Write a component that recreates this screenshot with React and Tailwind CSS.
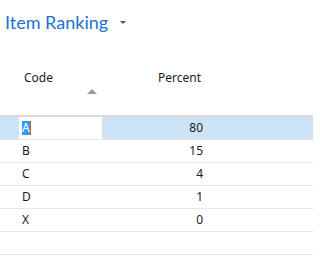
import React from 'react';

const rows = [
  { code: 'A', percent: 80 },
  { code: 'B', percent: 15 },
  { code: 'C', percent: 4 },
  { code: 'D', percent: 1 },
  { code: 'X', percent: 0 },
];

export default function App() {
  return (
    <div className="w-[313px] h-[263px] bg-white overflow-hidden text-[12px] text-[#1b1b1b]" style={{ fontFamily: '"Noto Sans", "Open Sans", sans-serif' }}>
      {/* page title */}
      <div className="flex items-center pl-[5px] pt-[10px] h-[34px]">
        <span className="text-[18px] leading-none text-[#1a73d1]" style={{ fontFamily: 'Lato, "Noto Sans", sans-serif' }}>Item Ranking</span>
        <span className="ml-[12px] w-0 h-0 border-l-[3px] border-r-[3px] border-t-[3px] border-l-transparent border-r-transparent border-t-[#555]" />
      </div>

      {/* column headers */}
      <div className="flex h-[83px] border-b-2 border-[#dadada]">
        <div className="w-[19px]" />
        <div className="w-[83px] relative">
          <span className="absolute left-[5px] top-[35px]">Code</span>
          <span className="absolute left-[68px] top-[55px] w-0 h-0 border-l-[5px] border-r-[5px] border-b-[5px] border-l-transparent border-r-transparent border-b-[#999]" />
        </div>
        <div className="w-[99px] relative">
          <span className="absolute right-0 top-[35px]">Percent</span>
        </div>
      </div>

      {/* rows */}
      {rows.map((r, i) => (
        <div key={r.code} className={`flex h-[23px] border-b border-[#e6e6e6] ${i === 0 ? 'bg-[#cde3f6]' : ''}`}>
          <div className="w-[19px]" />
          <div className={`w-[83px] flex items-center pl-[3px] ${i === 0 ? 'bg-white' : ''}`}>
            {i === 0 ? (
              <span className="flex items-center">
                <span className="bg-[#3399ff] text-white leading-[14px]">{r.code}</span>
                <span className="w-[1px] h-[14px] bg-[#c8600a]" />
              </span>
            ) : (
              <span>{r.code}</span>
            )}
          </div>
          <div className="w-[101px] flex items-center justify-end">{r.percent}</div>
        </div>
      ))}
      <div className="h-[23px] border-b border-[#e6e6e6]" />
    </div>
  );
}
